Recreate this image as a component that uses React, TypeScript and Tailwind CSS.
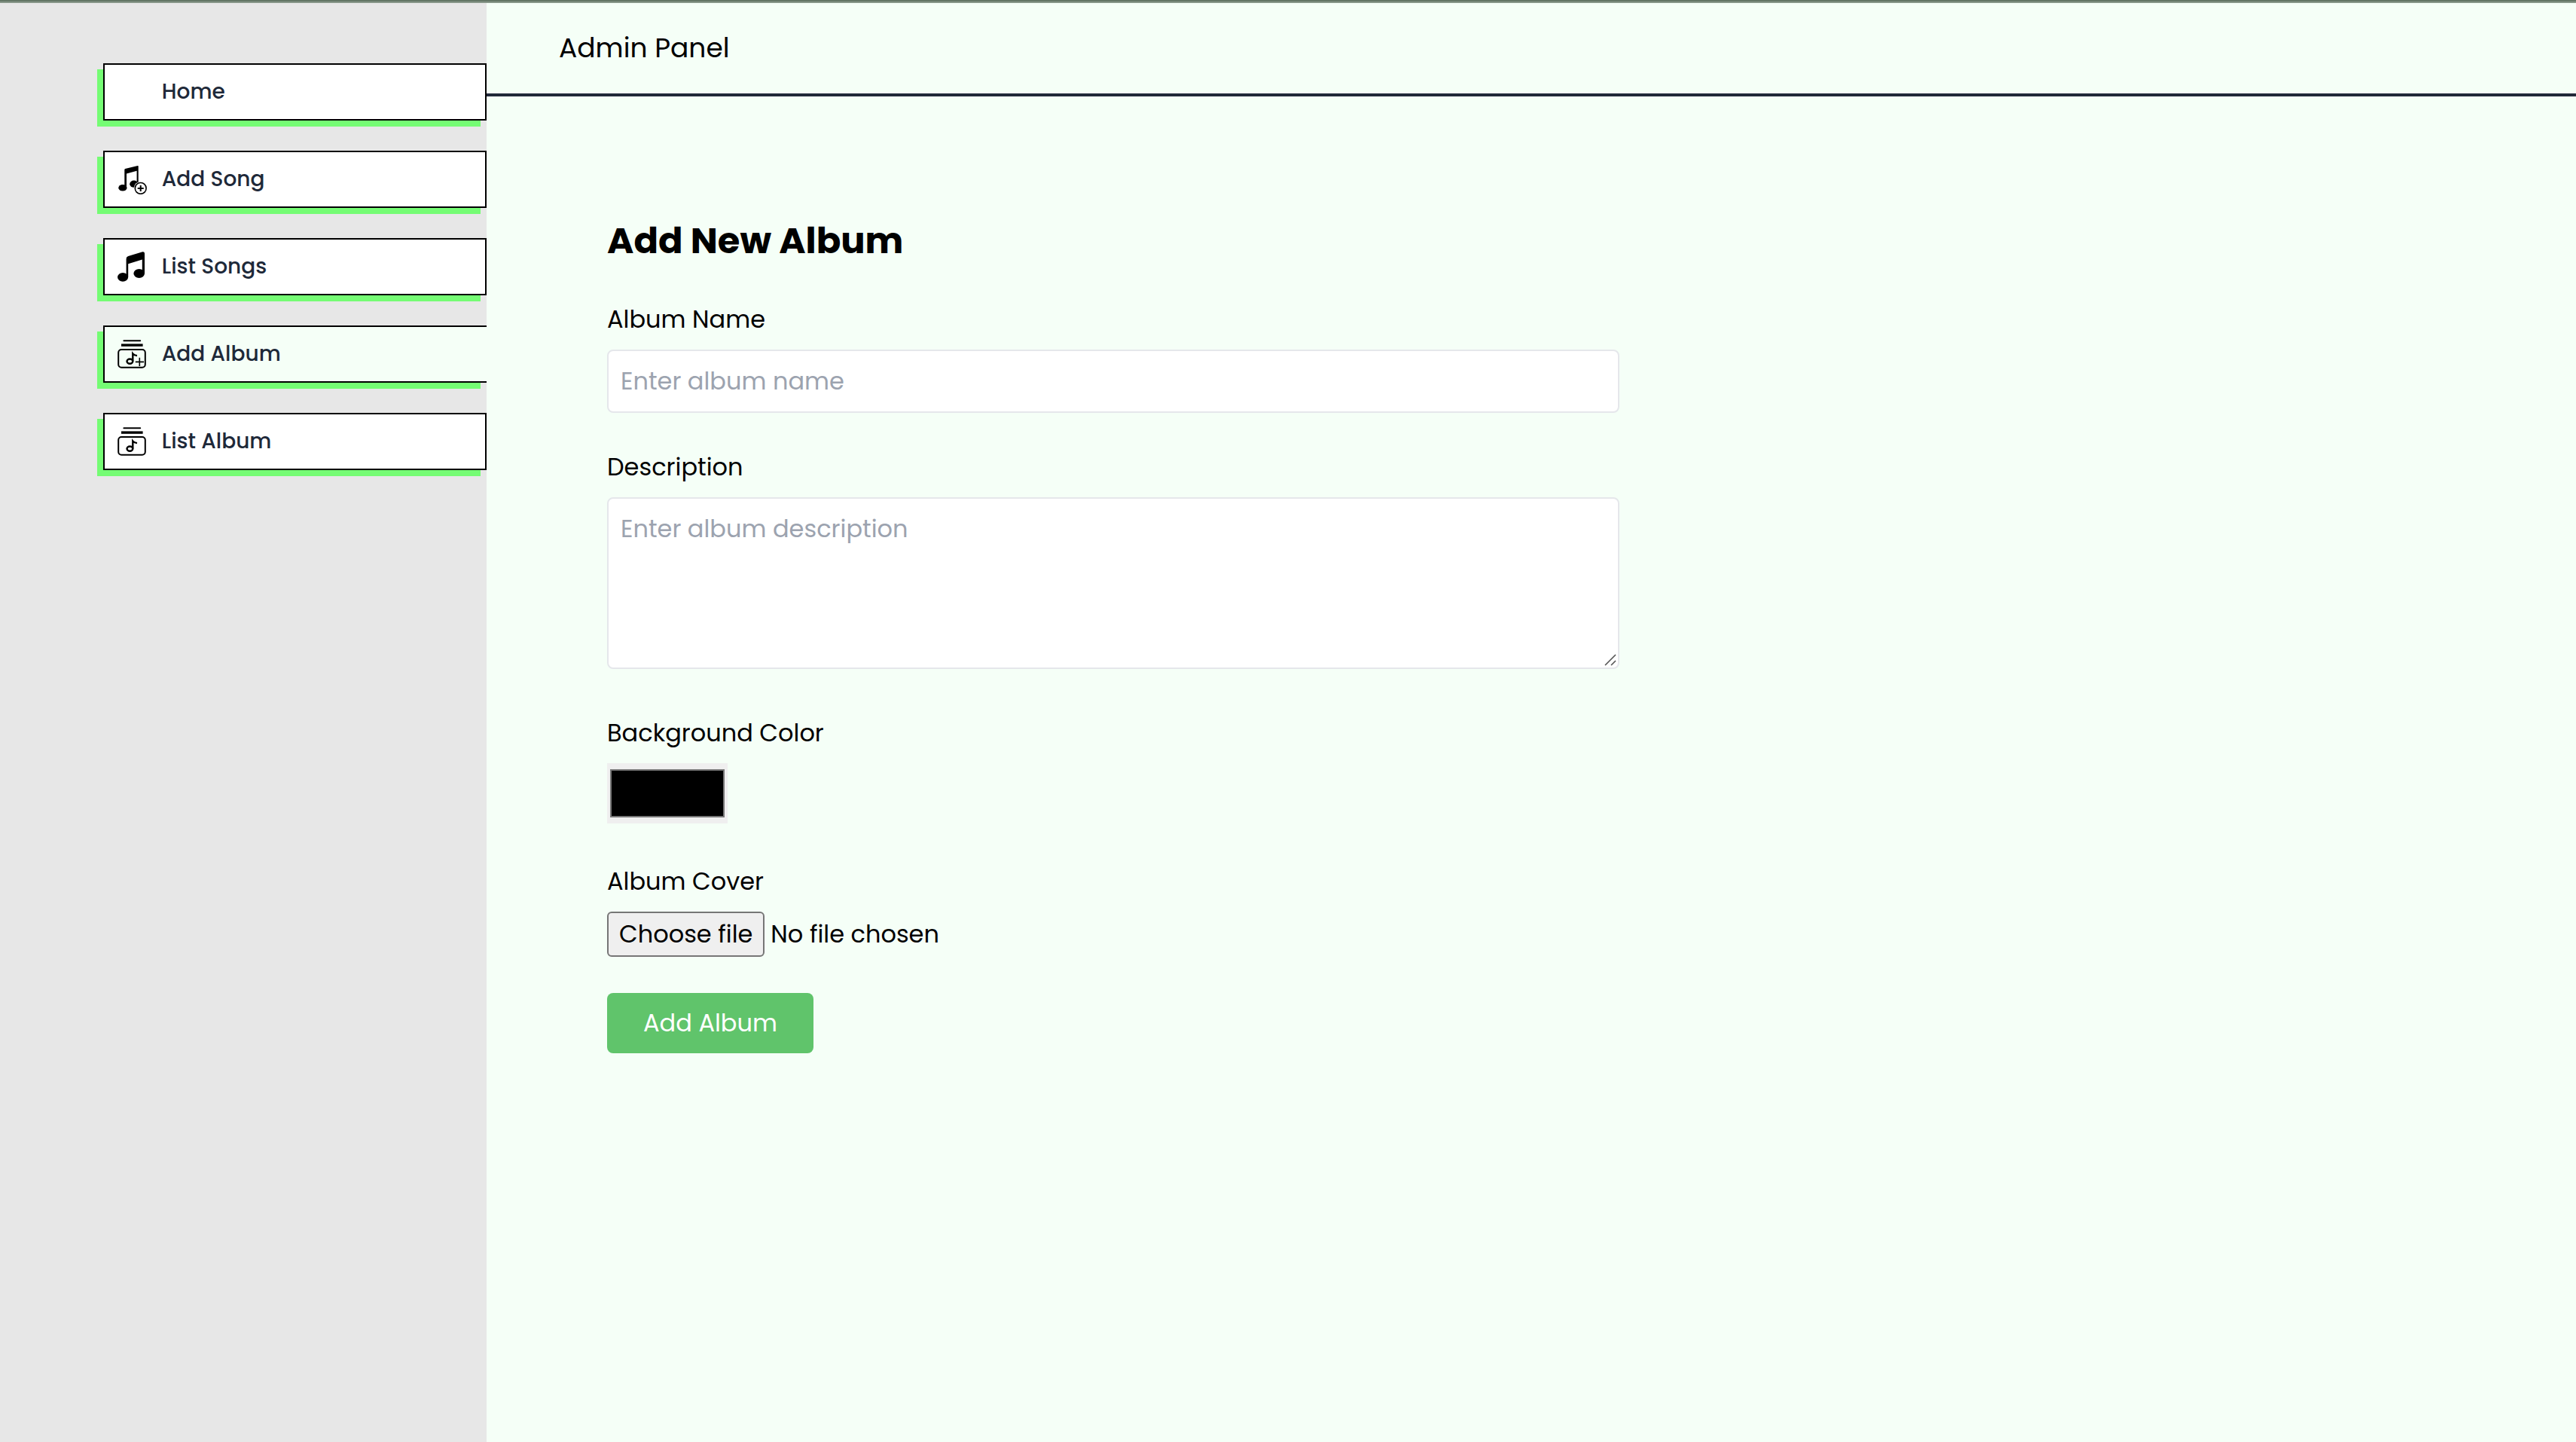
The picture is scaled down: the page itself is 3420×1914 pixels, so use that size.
import React, { useState } from "react";

function AddSongIcon() {
  return (
    <svg viewBox="0 0 40 40" className="size-10 shrink-0" aria-hidden="true">
      <path d="M10.3 7.2Q10.3 6.4 11.2 6.1L27.8 2.1Q28.7 1.9 28.7 2.8V26H26.6V8.8L13 12.4V31H10.3Z" />
      <ellipse cx="7.9" cy="31.2" rx="5.6" ry="4.3" />
      <ellipse cx="22.8" cy="26.2" rx="5.6" ry="4.6" />
      <circle cx="31.7" cy="31.9" r="9" fill="#fff" />
      <circle cx="31.7" cy="31.9" r="7.4" fill="#fff" stroke="#000" strokeWidth="1.6" />
      <path d="M31.7 27.9V35.9M27.7 31.9H35.7" stroke="#000" strokeWidth="2" />
    </svg>
  );
}

function ListSongsIcon() {
  return (
    <svg viewBox="0 0 40 40" className="size-10 shrink-0" aria-hidden="true">
      <path d="M12.6 9.4Q12.6 6.8 15.2 5.9L34.2 0.3Q37 -0.2 37 2.6V29H33.8V10.6L15.2 16.2V33.5H12.6Z" />
      <ellipse cx="8.1" cy="33.8" rx="7.1" ry="5.9" />
      <ellipse cx="29.7" cy="29" rx="7.3" ry="6" />
    </svg>
  );
}

function AlbumIcon({ plus = false }: { plus?: boolean }) {
  return (
    <svg viewBox="0 0 40 40" className="size-10 shrink-0" fill="none" stroke="#000" aria-hidden="true">
      <path d="M9.4 2.2H31.2" strokeWidth="2" strokeLinecap="round" />
      <path d="M6 8.1H34.6" strokeWidth="3.4" />
      <rect x="2.2" y="14" width="35.6" height="23.8" rx="4" strokeWidth="2" />
      <ellipse cx="17.4" cy="29.6" rx="3.9" ry="3.1" strokeWidth="2.4" />
      <path d="M21.3 29.6V19.4Q23 21.6 27 22.1" strokeWidth="2.4" />
      {plus && <path d="M30.3 24.8V36M24.8 30.4H36" strokeWidth="1.6" />}
    </svg>
  );
}

const navItems = [
  { label: "Home", icon: <span className="size-10 shrink-0" />, active: false },
  { label: "Add Song", icon: <AddSongIcon />, active: false },
  { label: "List Songs", icon: <ListSongsIcon />, active: false },
  { label: "Add Album", icon: <AlbumIcon plus />, active: true },
  { label: "List Album", icon: <AlbumIcon />, active: false },
];

function Sidebar() {
  return (
    <aside className="w-[646px] shrink-0 bg-[#e7e7e7] pl-[4vw] pt-20">
      <nav className="flex flex-col gap-10">
        {navItems.map((item) => (
          <a
            key={item.label}
            href="#"
            aria-current={item.active ? "page" : undefined}
            className={
              "flex items-center gap-5 border-2 border-black py-4 pl-4 text-[28px] leading-10 font-medium text-gray-800 shadow-[-8px_8px_0_0_#75fc74] " +
              (item.active ? "border-r-0 bg-[#f5fff7]" : "bg-white")
            }
          >
            {item.icon}
            <span>{item.label}</span>
          </a>
        ))}
      </nav>
    </aside>
  );
}

function AlbumForm() {
  const [fileName, setFileName] = useState("");
  const field =
    "block w-full rounded-lg border-2 border-gray-200 bg-white p-4 text-[32px] leading-[48px] placeholder:text-[#9ca3af] placeholder:opacity-100";

  return (
    <form className="max-w-[1344px]" onSubmit={(e) => e.preventDefault()}>
      <h1 className="mb-12 text-[48px] leading-[64px] font-bold">Add New Album</h1>

      <div className="mb-12">
        <label htmlFor="name" className="mb-4 block">Album Name</label>
        <input id="name" type="text" placeholder="Enter album name" className={field} />
      </div>

      <div className="mb-[61px]">
        <label htmlFor="description" className="mb-4 block">Description</label>
        <div className="relative">
          <textarea id="description" rows={4} placeholder="Enter album description" className={field + " resize-none"} />
          <svg viewBox="0 0 16 16" className="pointer-events-none absolute right-1 bottom-1 size-4" stroke="#555" strokeWidth="1.6" aria-hidden="true">
            <path d="M1 15L15 1M9 15L15 9" />
          </svg>
        </div>
      </div>

      <div className="mb-[53px]">
        <label htmlFor="color" className="mb-4 block">Background Color</label>
        <input
          id="color"
          type="color"
          defaultValue="#000000"
          className="block h-20 w-40 appearance-none bg-[#efefef] px-1 py-2 [&::-webkit-color-swatch]:rounded-none [&::-webkit-color-swatch]:border-2 [&::-webkit-color-swatch]:border-[#767676] [&::-webkit-color-swatch-wrapper]:p-0"
        />
      </div>

      <div className="mb-12">
        <label htmlFor="cover" className="mb-4 block">Album Cover</label>
        <div className="relative flex items-center gap-2">
          <input
            id="cover"
            type="file"
            accept="image/*"
            className="sr-only"
            onChange={(e) => setFileName(e.target.files?.[0]?.name ?? "")}
          />
          <label htmlFor="cover" className="rounded-md border-2 border-[#767676] bg-[#efefef] px-[14px] py-1">
            Choose file
          </label>
          <span>{fileName || "No file chosen"}</span>
        </div>
      </div>

      <button type="submit" className="rounded-lg bg-[#60c46b] px-12 py-4 text-white">
        Add Album
      </button>
    </form>
  );
}

export default function App() {
  return (
    <div className="flex min-h-screen flex-col bg-[#f5fff7] font-['Poppins','Inter',sans-serif] text-[32px] leading-[48px] text-black">
      <div className="h-1 border-b-2 border-[#869688] bg-[#637665]" />
      <div className="flex grow">
        <Sidebar />
        <div className="min-w-0 grow">
          <header className="border-b-4 border-[#22293a] py-8 pl-24">
            <p className="text-[36px] leading-[56px]">Admin Panel</p>
          </header>
          <main className="p-40">
            <AlbumForm />
          </main>
        </div>
      </div>
    </div>
  );
}
